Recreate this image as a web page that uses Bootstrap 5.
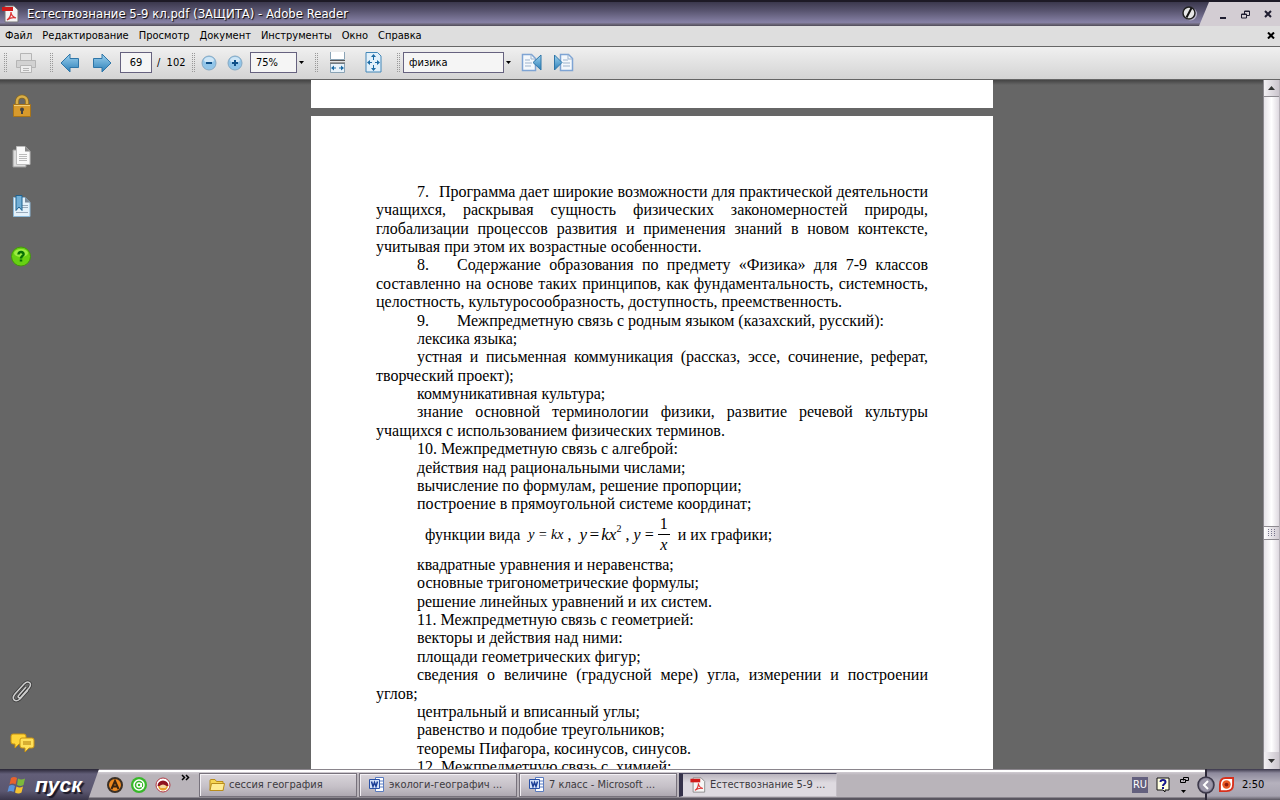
<!DOCTYPE html>
<html lang="ru">
<head>
<meta charset="utf-8">
<meta name="viewport" content="width=device-width, initial-scale=1">
<title>Естествознание 5-9 кл.pdf (ЗАЩИТА) - Adobe Reader</title>
<link href="https://cdn.jsdelivr.net/npm/bootstrap@5.3.0/dist/css/bootstrap.min.css" rel="stylesheet">
<style>
  body { font-family: "DejaVu Sans Condensed", "DejaVu Sans", sans-serif; font-size: 11px; line-height: 14px; color: #000; }
  button { border: 0; padding: 0; background: none; color: inherit; }
  svg { display: block; flex: none; }

  .titlebar { height: 26px; background: #d3cdd3; border-top: 2px solid #1d1a26; }
  .title-dark { background: linear-gradient(#3b384d, #57536e 35%, #8681a5 85%, #6f6a7c 92%, #4e4a58); clip-path: polygon(0 0, 100% 0, calc(100% - 10px) 100%, 0 100%); color: #fff; font-size: 13px; text-shadow: 1px 1px 1px #000; padding: 0 11px 0 2px; }
  .win-buttons { width: 71px; padding: 0 8px 0 10px; }
  .menubar { height: 20px; background: #dedede; padding-right: 5px; }
  .menubar a { color: #000; text-decoration: none; padding: 0 5px; }
  .toolbar { height: 34px; background: linear-gradient(#f0f0f0, #d4d4d4); border-top: 1px solid #666; border-bottom: 1px solid #666; padding-left: 3px; }
  .grip { width: 4px; height: 20px; margin: 0 1px 0 5px; flex: none; background: conic-gradient(#999 25%, transparent 0) 0 0 / 2px 2px; }
  .grip:first-child { margin-left: 0; }
  .tool { width: 32px; height: 32px; display: flex; align-items: center; justify-content: center; flex: none; }
  .tool-sm { width: 26px; }
  .tool-lg { width: 36px; }
  .field { height: 21px; margin-left: 2px; border: 1px solid #66627f; border-radius: 0; background: #f5f5f5; padding: 0 5px; font-size: 11px; line-height: 14px; color: #000; appearance: none; }
  .field-page { width: 32px; }
  .field-zoom { width: 47px; }
  .field-find { width: 101px; }
  .page-total { width: 34px; padding-left: 5px; white-space: nowrap; }
  .caret-btn { width: 12px; height: 20px; padding-left: 2px; display: flex; align-items: center; }

  .workspace { background: linear-gradient(#444, #666 5px); }
  .side { width: 41px; padding: 14px 0 14px 10px; }
  .side button { height: 26px; display: flex; align-items: center; }
  .sheet { width: 682px; background: #fff; flex: none; }
  .sheet-end { height: 28px; }
  .doc { padding: 67px 65px 0; font-family: "Liberation Serif", "Times New Roman", serif; font-size: 16px; line-height: 1.15; }
  .doc p { margin: 0; text-indent: 41px; text-align: justify; }
  .num { display: inline-block; width: 40px; text-indent: 0; }
  .num-short { width: 22px; }
  .formula { height: 42px; padding-left: 49px; }
  .formula i { white-space: nowrap; }
  .math-sm { font-size: 14px; }
  .math-lg { font-size: 17px; }
  .formula sup { font-size: 10px; font-style: normal; top: -8px; }
  .frac { line-height: 20px; text-align: center; }
  .frac > :first-child { border-bottom: 1px solid #000; padding: 0 2px; }
  .scroll { width: 17px; background: linear-gradient(90deg, #e6e3e8, #fff 50%, #ded9e0); border-left: 1px solid #8d8a90; border-right: 1px solid #b8b3ba; flex: none; }
  .scroll button { height: 17px; background: linear-gradient(90deg, #f2f0f3, #cbc5cd); border-bottom: 1px solid #8d8a90; display: flex; align-items: center; justify-content: center; }
  .thumb { height: 14px; border: solid #8d8a90; border-width: 1px 0; background: linear-gradient(90deg, #fff, #d0cad2); display: flex; align-items: center; justify-content: center; }

  .taskbar { height: 31px; background: linear-gradient(#8a858c 0 1px, #fff 1px 3px, #d0cbd2 3px, #b9b4ba 6px, #b9b4ba 28px, #5a5660 29px); }
  .start { width: 99px; padding-left: 7px; gap: 8px; background: linear-gradient(#292636, #625e78 5px, #5b5770 22px, #3a364a); clip-path: polygon(0 0, 100% 0, calc(100% - 11px) 100%, 0 100%); color: #fff; font-family: "Liberation Sans", Arial, sans-serif; font-size: 21px; line-height: 24px; font-weight: 700; font-style: italic; text-shadow: 2px 2px 1px #1a1826; }
  .tasks { gap: 2px; }
  .task { width: 158px; height: 24px; border: 1px solid #77727c; box-shadow: inset 1px 1px #f4f1f5; background: linear-gradient(#d9d5db, #c4bfc6 60%, #aea8b1); color: #3c3a40; padding-left: 9px; text-align: left; }
  .task-on { background: linear-gradient(#b9b4bd, #dedae0 40%, #dedae0); border-color: #4b4860 #c4bfc6 #c4bfc6 #35324a; border-left-width: 4px; box-shadow: none; padding-left: 7px; }
  .lang { background: #63607e; color: #fff; width: 16px; height: 16px; text-align: center; line-height: 16px; }
  .tray { width: 75px; background: linear-gradient(#3a364a, #8d899c 4px, #b5b1bd 14px, #a7a3b0 27px, #5a5660); border-left: 2px solid #2c2938; }
  .tray-arrow { margin-left: -10px; }
</style>
</head>
<body class="vh-100 d-flex flex-column overflow-hidden">

<header class="titlebar d-flex flex-shrink-0">
  <div class="title-dark d-flex flex-grow-1 align-items-center">
    <svg width="17" height="18" viewBox="0 0 17 18"><path d="M3 1h9l4 4v12H3z" fill="#f3f3f3" stroke="#777"/><path d="M0 2h11v4H0z" fill="#d21a1a"/><path d="M5 15c3-2 4-5 4-8 0 3 2 5 5 6-3-1-6 0-9 2z" fill="none" stroke="#d33" stroke-width="1.2"/></svg>
    <span class="flex-grow-1 ps-2">Естествознание 5-9 кл.pdf (ЗАЩИТА) - Adobe Reader</span>
    <svg width="16" height="18" viewBox="0 0 16 18"><circle cx="8.500" cy="9" r="6.500" fill="#b9b5cc"/><circle cx="7" cy="8" r="6" fill="#e6e6e6" stroke="#222" stroke-width="1.500"/><path d="M4.500 12.500l5-9.500" stroke="#111" stroke-width="2"/></svg>
  </div>
  <div class="win-buttons d-flex align-items-center justify-content-between">
    <button aria-label="Свернуть"><svg width="8" height="10" viewBox="0 0 8 10"><path d="M1 9h6" stroke="#1f1d30" stroke-width="2"/></svg></button>
    <button aria-label="Восстановить"><svg width="9" height="9" viewBox="0 0 9 9"><path d="M3.500 5V1h5v4.500H6M.5 4h5v4h-5zM.5 4.500h5M3.500 1.500h5" fill="none" stroke="#1f1d30"/></svg></button>
    <button aria-label="Закрыть"><svg width="8" height="8" viewBox="0 0 8 8"><path d="M1 1l6 6M7 1L1 7" stroke="#1f1d30" stroke-width="2"/></svg></button>
  </div>
</header>

<nav class="menubar d-flex align-items-center" aria-label="Меню">
  <a href="#">Файл</a><a href="#">Редактирование</a><a href="#">Просмотр</a><a href="#">Документ</a><a href="#">Инструменты</a><a href="#">Окно</a><a href="#">Справка</a>
  <button class="ms-auto" aria-label="Закрыть документ"><svg width="8" height="7" viewBox="0 0 8 7"><path d="M1 .5l6 6M7 .5l-6 6" stroke="#000" stroke-width="2"/></svg></button>
</nav>

<div class="toolbar d-flex align-items-center">
  <span class="grip"></span>
  <button class="tool tool-lg" aria-label="Печать"><svg width="22" height="22" viewBox="0 0 22 22" fill="#d2d2d2" stroke="#b5b5b5"><path d="M5.500 1.500h11v8h-11z" fill="#e4e4e4"/><path d="M1.500 8.500h19v7h-19z"/><path d="M5.500 13.500h11v7h-11z" fill="#eee"/><path d="M8 16.500h6M8 18.500h6"/></svg></button>
  <span class="grip"></span>
  <button class="tool" aria-label="Предыдущая страница"><svg width="20" height="20" viewBox="0 0 20 20"><defs><linearGradient id="blue" x2="0" y2="1"><stop stop-color="#9fd3f0"/><stop offset="1" stop-color="#2b7fb8"/></linearGradient></defs><path d="M1 10L10 1v4.500h8.500v9H10V19z" fill="url(#blue)" stroke="#2f76a8"/></svg></button>
  <button class="tool" aria-label="Следующая страница"><svg width="20" height="20" viewBox="0 0 20 20"><path d="M19 10L10 1v4.500H1.500v9H10V19z" fill="url(#blue)" stroke="#2f76a8"/></svg></button>
  <input class="field field-page text-center" value="69" aria-label="Страница">
  <span class="page-total">/&nbsp; 102</span>
  <span class="grip"></span>
  <button class="tool tool-sm" aria-label="Уменьшить"><svg width="16" height="16" viewBox="0 0 16 16"><circle cx="8" cy="8" r="7" fill="#92c5e8" stroke="#86a9c4"/><ellipse cx="8" cy="5" rx="5" ry="3" fill="#cfe6f6"/><path d="M5 8h6" stroke="#0d4f88" stroke-width="2"/></svg></button>
  <button class="tool tool-sm" aria-label="Увеличить"><svg width="16" height="16" viewBox="0 0 16 16"><circle cx="8" cy="8" r="7" fill="#92c5e8" stroke="#86a9c4"/><ellipse cx="8" cy="5" rx="5" ry="3" fill="#cfe6f6"/><path d="M5 8h6M8 5v6" stroke="#0d4f88" stroke-width="2"/></svg></button>
  <select class="field field-zoom" aria-label="Масштаб"><option>75%</option></select>
  <span class="caret-btn"><svg width="5" height="3" viewBox="0 0 5 3"><path d="M0 0h5L2.500 3z"/></svg></span>
  <span class="grip"></span>
  <button class="tool tool-lg" aria-label="По ширине"><svg width="17" height="21" viewBox="0 0 17 21"><path d="M1.500 0v7.500h14V0" fill="#fff" stroke="#8aa3b5"/><path d="M1.500 20.500v-9h14v9z" fill="#e9f3fa" stroke="#8aa3b5"/><path d="M1 8.500h15M1 11h15" stroke="#555"/><path d="M3 16h4M10 16h4" stroke="#1c6ba5"/><path d="M2 16l3-2.500v5zM15 16l-3-2.500v5z" fill="#1c6ba5"/></svg></button>
  <button class="tool tool-lg" aria-label="Страница целиком"><svg width="17" height="21" viewBox="0 0 17 21"><path d="M1 .5h11.500L16 4v16H1z" fill="#e2f0fa" stroke="#4287b8"/><path d="M8.500 3v5M8.500 13v5M3 10.500h4M10 10.500h4" stroke="#1c6ba5"/><path d="M8.500 2L11 5H6zM8.500 19L11 16H6zM2 10.500L5 8v5zM15 10.500L12 8v5z" fill="#1c6ba5"/></svg></button>
  <span class="grip"></span>
  <input class="field field-find" value="физика" aria-label="Найти">
  <button class="caret-btn" aria-label="Параметры поиска"><svg width="5" height="3" viewBox="0 0 5 3"><path d="M0 0h5L2.500 3z"/></svg></button>
  <button class="tool" aria-label="Найти предыдущее"><svg width="22" height="20" viewBox="0 0 22 20"><path d="M1.500 1.500h9l4 4v12h-13z" fill="#f4f8fc" stroke="#7ea4d4" stroke-width="1.500"/><path d="M10 1.500V6h4.500M4 7h5M4 10h7M4 13h6" fill="none" stroke="#9db3cc"/><path d="M20 2v15l-8-7.500z" fill="url(#blue)" stroke="#2f76a8"/></svg></button>
  <button class="tool" aria-label="Найти следующее"><svg width="22" height="20" viewBox="0 0 22 20"><path d="M7.500 1.500h8l4 4v12h-12z" fill="#f4f8fc" stroke="#7ea4d4" stroke-width="1.500"/><path d="M15 1.500V6h4.500M10 7h5M10 10h7M10 13h7" fill="none" stroke="#9db3cc"/><path d="M1.500 2v15l7.500-7.500z" fill="url(#blue)" stroke="#2f76a8"/></svg></button>
</div>

<div class="workspace d-flex flex-grow-1 overflow-hidden">
  <aside class="side d-flex flex-column flex-shrink-0">
    <button class="mb-4" aria-label="Защита"><svg width="24" height="26" viewBox="0 0 24 26"><path d="M7 11V7.500a5 5 0 0 1 10 0V11" fill="none" stroke="#8a6a20" stroke-width="4"/><path d="M7 11V7.500a5 5 0 0 1 10 0V11" fill="none" stroke="#d9ae48" stroke-width="2.500"/><path d="M3.500 10.500h17v12h-17z" fill="#d79a2c" stroke="#a87418"/><path d="M4 11.500h16" stroke="#f2cf7a"/><circle cx="12" cy="15.500" r="2" fill="#444"/><path d="M12 15v5" stroke="#444" stroke-width="2"/></svg></button>
    <button class="mb-4" aria-label="Страницы"><svg width="24" height="26" viewBox="0 0 24 26"><path d="M3 6h13v17H3z" fill="#ddd" stroke="#999"/><path d="M6.500 2.500H15l5 5v13H6.500z" fill="#fafafa" stroke="#bbb"/><path d="M15 2.500v5h5z" fill="#888"/><path d="M9 10.500h8M9 12.500h8M9 14.500h8M9 16.500h8" stroke="#bbb"/></svg></button>
    <button class="mb-4" aria-label="Закладки"><svg width="24" height="26" viewBox="0 0 24 26"><path d="M3.500 3.500H15l5 5v14H3.500z" fill="#e4f1fa" stroke="#8bb8d8"/><path d="M15 3.500v5h5z" fill="#789"/><path d="M12 11.500h6M12 13.500h6M6 18.500h12" stroke="#9ab"/><path d="M6 1.500h6v15l-3-3.500-3 3.500z" fill="#71aed6" stroke="#1f628f"/></svg></button>
    <button aria-label="Справка"><svg width="24" height="24" viewBox="0 0 24 24"><circle cx="11" cy="11.500" r="9.500" fill="#67d012" stroke="#43960c"/><ellipse cx="11" cy="8" rx="7" ry="4" fill="#9bec40"/><path d="M8.500 9.500c0-3.500 5.500-3 5 0-.3 1.500-2.500 1.500-2.500 4M11 14.500v2" fill="none" stroke="#067006" stroke-width="2.500"/></svg></button>
    <button class="mt-auto mb-4" aria-label="Вложения"><svg width="24" height="26" viewBox="0 0 24 26" fill="none"><path d="M16 8l-7 8c-2 2 0 4 2 2l8-9c4-5-1-8-5-4l-9 10c-4 5 0 9 5 5l8-9" stroke="#333" stroke-width="3"/><path d="M16 8l-7 8c-2 2 0 4 2 2l8-9c4-5-1-8-5-4l-9 10c-4 5 0 9 5 5l8-9" stroke="#ccc" stroke-width="1.600"/></svg></button>
    <button aria-label="Комментарии"><svg width="25" height="22" viewBox="0 0 25 22"><path d="M3 3h11q2 0 2 2v6q0 2-2 2H9l-4 4v-4H3q-2 0-2-2V5q0-2 2-2z" fill="#ffd53a" stroke="#c89210"/><path d="M12 7h10q2 0 2 2v6q0 2-2 2h-3l-4 4v-4h-3q-2 0-2-2V9q0-2 2-2z" fill="#ffe05a" stroke="#c89210"/><path d="M13 11h8M13 13h8" stroke="#b07c08"/></svg></button>
  </aside>

  <main class="flex-grow-1 d-flex flex-column align-items-center gap-2 overflow-hidden">
    <div class="sheet sheet-end"></div>
    <article class="sheet doc">
      <p><span class="num num-short">7.</span>Программа дает широкие возможности для практической деятельности учащихся, раскрывая сущность физических закономерностей природы, глобализации процессов развития и применения знаний в новом контексте, учитывая при этом их возрастные особенности.</p>
      <p><span class="num">8.</span>Содержание образования по предмету «Физика» для 7-9 классов составленно на основе таких принципов, как фундаментальность, системность, целостность, культуросообразность, доступность, преемственность.</p>
      <p><span class="num">9.</span>Межпредметную связь с родным языком (казахский, русский):</p>
      <p>лексика языка;</p>
      <p>устная и письменная коммуникация (рассказ, эссе, сочинение, реферат, творческий проект);</p>
      <p>коммуникативная культура;</p>
      <p>знание основной терминологии физики, развитие речевой культуры учащихся с использованием физических терминов.</p>
      <p>10. Межпредметную связь с алгеброй:</p>
      <p>действия над рациональными числами;</p>
      <p>вычисление по формулам, решение пропорции;</p>
      <p>построение в прямоугольной системе координат;</p>
      <div class="formula d-flex align-items-center">
        <span>функции вида</span>
        <i class="math-sm ms-2">y = kx</i><span class="ms-1">,</span>
        <i class="math-lg ms-2">y&hairsp;=&hairsp;kx<sup>2</sup></i><span class="ms-1">,</span>
        <i class="ms-1">y&thinsp;=&thinsp;</i>
        <span class="frac d-flex flex-column"><span>1</span><i>x</i></span>
        <span class="ms-2">и их графики;</span>
      </div>
      <p>квадратные уравнения и неравенства;</p>
      <p>основные тригонометрические формулы;</p>
      <p>решение линейных уравнений и их систем.</p>
      <p>11. Межпредметную связь с геометрией:</p>
      <p>векторы и действия над ними:</p>
      <p>площади геометрических фигур;</p>
      <p>сведения о величине (градусной мере) угла, измерении и построении углов;</p>
      <p>центральный и вписанный углы;</p>
      <p>равенство и подобие треугольников;</p>
      <p>теоремы Пифагора, косинусов, синусов.</p>
      <p>12. Межпредметную связь с&nbsp; химией:</p>
    </article>
  </main>

  <div class="scroll d-flex flex-column">
    <button aria-label="Вверх"><svg width="7" height="4" viewBox="0 0 7 4"><path d="M0 4h7L3.500 0z" fill="#333"/></svg></button>
    <div style="flex:67 0 0"></div>
    <div class="thumb"><svg width="7" height="8" viewBox="0 0 7 8"><path d="M.5 0v8M3.500 0v8M6.500 0v8" stroke="#77748c" stroke-dasharray="1 1"/></svg></div>
    <div style="flex:33 0 0"></div>
    <button class="border-0" aria-label="Вниз"><svg width="7" height="4" viewBox="0 0 7 4"><path d="M0 0h7L3.500 4z" fill="#333"/></svg></button>
  </div>
</div>

<footer class="taskbar d-flex flex-shrink-0">
  <button class="start d-flex align-items-center">
    <svg width="20" height="18" viewBox="0 0 20 18"><path d="M4 2q3-2 6 0L8.500 8.500q-3-2-6 0z" fill="#e8622c"/><path d="M11 2.500q3 2 7 0L16.500 9q-3 2-6.500 0z" fill="#7cb83c"/><path d="M2 10q3-2 6 0l-1.500 6q-3-2-6 0z" fill="#5b93dc"/><path d="M9.500 10.500q3 2 6.500 0l-1.500 6q-3 2-6.500 0z" fill="#f6c230"/></svg>
    <span>пуск</span>
  </button>
  <div class="d-flex gap-2 ps-2 pt-2">
    <svg width="16" height="16" viewBox="0 0 16 16"><circle cx="8" cy="8" r="7" fill="#f08a20" stroke="#3b3026" stroke-width="2"/><path d="M4.500 12L8 4l3.500 8M5.500 9.500h5" fill="none" stroke="#3b2410" stroke-width="2"/></svg>
    <svg width="16" height="16" viewBox="0 0 16 16"><circle cx="8" cy="8" r="8" fill="#38b82a"/><circle cx="8" cy="8" r="5" fill="none" stroke="#fff" stroke-width="1.500"/><circle cx="8" cy="8" r="2" fill="none" stroke="#fff" stroke-width="1.500"/><path d="M10.500 6v4l2 1" fill="none" stroke="#fff"/></svg>
    <svg width="16" height="16" viewBox="0 0 16 16"><circle cx="8" cy="8" r="7" fill="#fff" stroke="#b33a44"/><path d="M2.500 9a5.500 5.500 0 0 1 11 0z" fill="#8f1220"/><path d="M3 9h10q-1 4.500-5 4.500T3 9z" fill="#e9a02c"/><path d="M4.500 9q3.500-3 7 0l-1 2h-5z" fill="#f5d9a0"/></svg>
  </div>
  <svg class="mt-1 ms-2" width="12" height="9" viewBox="0 0 12 9"><path d="M3 2l2.500 2.500L3 7M7 2l2.500 2.500L7 7" fill="none" stroke="#000" stroke-width="1.500"/></svg>
  <div class="tasks d-flex pt-1 ps-2">
    <button class="task d-flex align-items-center gap-1"><svg width="16" height="14" viewBox="0 0 16 14"><path d="M1 2.500q0-1 1-1h4l1.500 2H14v9H1z" fill="#f6d552" stroke="#b98d1c"/><path d="M1 12.500l1.500-7H15.500L14 12.500z" fill="#ffec94" stroke="#b98d1c"/></svg><span>сессия география</span></button>
    <button class="task d-flex align-items-center gap-1"><svg width="16" height="16" viewBox="0 0 16 16"><path d="M6.500.5h8v14h-8z" fill="#fff" stroke="#5b7cc0"/><path d="M11 4h3M11 7h3M11 10h3" stroke="#5b7cc0"/><path d="M.5 2.500h10v9H.5z" fill="#d6e3fa" stroke="#2a52a8"/><path d="M2.500 4.500L4 9.500l1.500-4 1.500 4 1.500-5" fill="none" stroke="#1c3f96" stroke-width="1.500"/></svg><span>экологи-географич ...</span></button>
    <button class="task d-flex align-items-center gap-1"><svg width="16" height="16" viewBox="0 0 16 16"><path d="M6.500.5h8v14h-8z" fill="#fff" stroke="#5b7cc0"/><path d="M11 4h3M11 7h3M11 10h3" stroke="#5b7cc0"/><path d="M.5 2.500h10v9H.5z" fill="#d6e3fa" stroke="#2a52a8"/><path d="M2.500 4.500L4 9.500l1.500-4 1.500 4 1.500-5" fill="none" stroke="#1c3f96" stroke-width="1.500"/></svg><span>7 класс - Microsoft ...</span></button>
    <button class="task task-on d-flex align-items-center gap-1"><svg width="16" height="16" viewBox="0 0 17 18"><path d="M3 1h9l4 4v12H3z" fill="#f6f6f6" stroke="#888"/><path d="M0 2h11v4H0z" fill="#d21a1a"/><path d="M5 15c3-2 4-5 4-8 0 3 2 5 5 6-3-1-6 0-9 2z" fill="none" stroke="#d33" stroke-width="1.200"/></svg><span>Естествознание 5-9 ...</span></button>
  </div>
  <div class="d-flex align-items-center gap-2 ms-auto me-3">
    <span class="lang">RU</span>
    <svg width="14" height="16" viewBox="0 0 14 16"><path d="M1 1h12v12H9v2l-2-2H1z" fill="#ffffe0" stroke="#111"/><path d="M4.500 5c0-3 5-2.500 5 0C9.500 7 7 7 7 9M7 10v2" fill="none" stroke="#15158c" stroke-width="2"/></svg>
    <svg width="11" height="18" viewBox="0 0 11 18"><path d="M5.500 4.500V1.500h5v3H8M2.500 3.500h5v3h-5z" fill="none" stroke="#000"/><path d="M3 14h5l-2.500 3z"/></svg>
  </div>
  <div class="tray d-flex align-items-center gap-1">
    <button class="tray-arrow" aria-label="Показать значки"><svg width="18" height="18" viewBox="0 0 18 18"><circle cx="9" cy="9" r="8" fill="#7d798c" stroke="#3a3748" stroke-width="1.500"/><circle cx="9" cy="9" r="6.500" fill="#9a96a8"/><path d="M11 5L7 9l4 4" fill="none" stroke="#fff" stroke-width="2"/></svg></button>
    <svg width="15" height="15" viewBox="0 0 16 16"><path d="M7 1h8v7q0 7-7 7H1V8q0-7 6-7z" fill="#fff" stroke="#d8301c" stroke-width="2"/><circle cx="8" cy="8" r="4.500" fill="#e85a24"/><circle cx="8" cy="8" r="2" fill="#8f1c10"/></svg>
    <time class="ms-1">2:50</time>
  </div>
</footer>

<script src="https://cdn.jsdelivr.net/npm/bootstrap@5.3.0/dist/js/bootstrap.bundle.min.js"></script>
</body>
</html>
